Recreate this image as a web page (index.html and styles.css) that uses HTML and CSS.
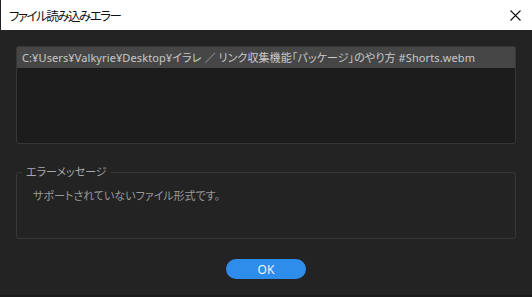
FILE: index.html
```html
<!DOCTYPE html>
<html lang="ja">
<head>
    <meta charset="UTF-8">
    <meta name="viewport" content="width=device-width, initial-scale=1.0">
    <title>ファイル読み込みエラー</title>
    <link rel="stylesheet" href="styles.css">
</head>
<body>
    <div class="titlebar">
        <span class="title">ファイル読み込みエラー</span>
        <button class="close" aria-label="閉じる">
            <svg width="11" height="11" viewBox="0 0 11 11">
                <path d="M0.5 0.5 L10.5 10.5 M10.5 0.5 L0.5 10.5" stroke="#111" stroke-width="1.1" fill="none"/>
            </svg>
        </button>
    </div>

    <div class="content">
        <div class="file-list">
            <div class="file-row">C:¥Users¥Valkyrie¥Desktop¥イラレ ／ リンク収集機能「パッケージ」のやり方 #Shorts.webm</div>
        </div>

        <fieldset class="message-box">
            <legend>エラーメッセージ</legend>
            <div class="message">サポートされていないファイル形式です。</div>
        </fieldset>

        <div class="actions">
            <button class="ok-btn">OK</button>
        </div>
    </div>

    <div class="statusbar"></div>
</body>
</html>
```

FILE: styles.css
```css
body {
    margin: 0;
    background-color: #232323;
    font-family: "Noto Sans", "Noto Sans CJK JP", sans-serif;
    font-feature-settings: "palt";
    font-size: 11px;
    height: 297px;
    overflow: hidden;
    display: flex;
    flex-direction: column;
}
.titlebar {
    height: 30px;
    background-color: #fff;
    display: flex;
    align-items: center;
    justify-content: space-between;
    padding: 0 11px 0 8px;
    margin-left: 1px;
}
.title {
    font-size: 12.5px;
    letter-spacing: -1.5px;
    color: #111;
}
.close {
    border: none;
    background: none;
    padding: 0;
    display: flex;
    margin-top: 1px;
}
.content {
    flex: 1;
    padding: 16px 16px 0;
}
.file-list {
    height: 96px;
    border: 1px solid #373737;
    border-radius: 3px;
    background-color: #1c1c1c;
}
.file-row {
    height: 21px;
    line-height: 21px;
    background-color: #464646;
    color: #c9c9c9;
    padding-left: 5px;
    letter-spacing: 0.1px;
    white-space: nowrap;
    overflow: hidden;
}
.message-box {
    margin: 20px 0 0;
    padding: 0;
    border: 1px solid #373737;
    border-radius: 3px;
    min-width: 0;
}
.message-box legend {
    margin-left: 5px;
    padding: 0 4px;
    line-height: 16px;
    color: #a8a8a8;
}
.message {
    height: 58px;
    padding: 7px 0 0 16px;
    box-sizing: border-box;
    color: #9a9a9a;
}
.actions {
    display: flex;
    justify-content: center;
    margin-top: 20px;
}
.ok-btn {
    width: 80px;
    height: 20px;
    border: none;
    border-radius: 10px;
    background-color: #2e8ceb;
    color: #f2f2f2;
    font-family: "Noto Sans", sans-serif;
    font-size: 12px;
    padding: 0;
    cursor: pointer;
}
.statusbar {
    height: 2px;
    background-color: #1b1b1b;
}
```
